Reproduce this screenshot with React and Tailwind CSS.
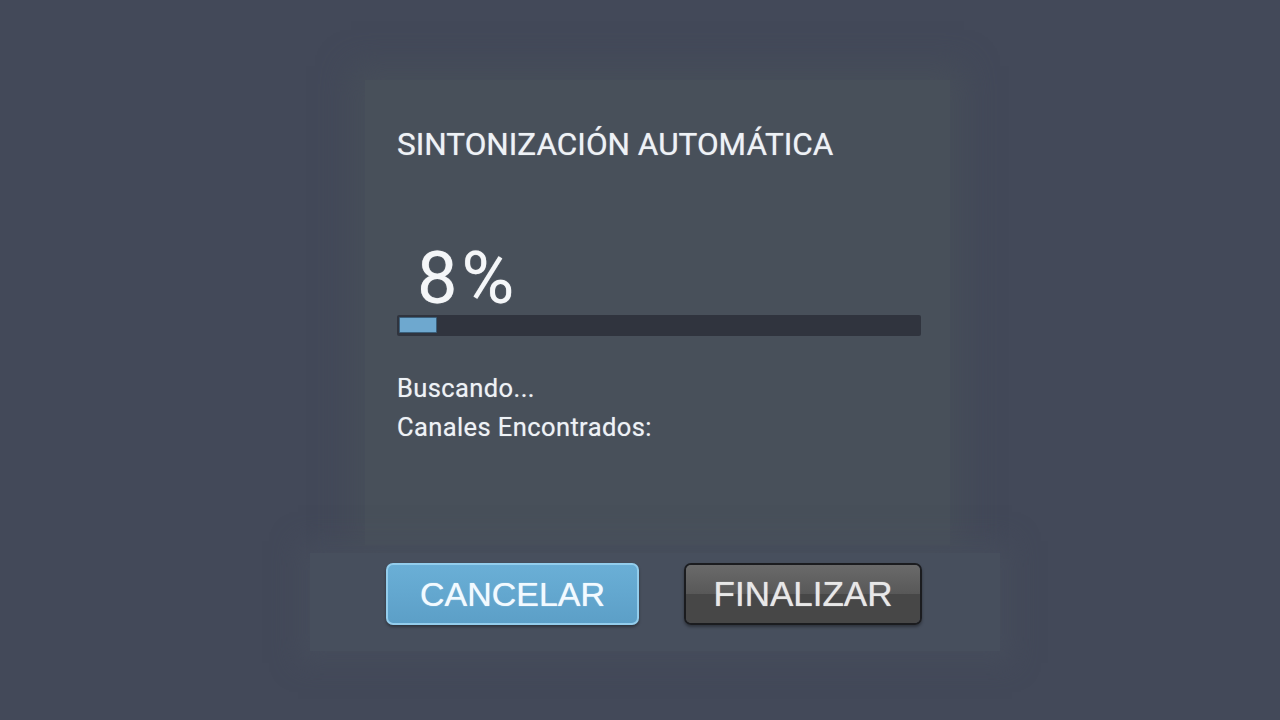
export default function App() {
  return (
    <div
      className="w-full h-[720px] bg-[#434959] overflow-hidden flex flex-col"
      style={{ fontFamily: "Roboto, 'Noto Sans', sans-serif" }}
    >
      <div className="pl-[365px] pt-[80px]">
        <div className="w-[585px] h-[465px] bg-[#48505a] shadow-[0_0_30px_14px_rgba(72,80,90,0.75)] pl-[32px] pt-[49px] flex flex-col">
          <div className="text-[31.5px] leading-[31px] text-[#eef2f6] [text-shadow:0_0_1px_rgba(255,255,255,0.6)]">
            SINTONIZACIÓN AUTOMÁTICA
          </div>
          <div className="mt-[83px] pl-[20px] text-[72px] leading-[72px] tracking-[4px] text-[#f4f6f8] [text-shadow:0_0_1px_rgba(255,255,255,0.6)]">
            8%
          </div>
          <div className="w-[524px] h-[21px] bg-[#30343e] rounded-[2px] p-[2px] pb-[3px] flex">
            <div className="w-[38px] h-full bg-[#6ea8cf] border border-[#3b5f7a] rounded-[1px]"></div>
          </div>
          <div className="mt-[33px] text-[25.5px] leading-[39px] tracking-[0.4px] text-[#eef2f6] [text-shadow:0_0_1px_rgba(255,255,255,0.5)]">
            <div>Buscando...</div>
            <div>Canales Encontrados:</div>
          </div>
        </div>
      </div>
      <div className="pl-[310px] pt-[8px]">
        <div className="w-[690px] h-[98px] bg-[#474f5d] shadow-[0_0_24px_12px_rgba(71,79,93,0.7)] pl-[76px] pt-[10px] flex gap-[45px]">
          <div
            className="w-[253px] h-[62px] rounded-[7px] border-2 border-[#93cdec] bg-gradient-to-b from-[#6aafd6] via-[#63a7cf] to-[#5c9fc7] flex items-center justify-center text-[34px] text-[#f2faff] shadow-[0_2px_3px_rgba(0,0,0,0.35)] [text-shadow:0_0_1px_rgba(255,255,255,0.8)]"
            style={{ fontFamily: "'Liberation Sans', Arial, sans-serif" }}
          >
            CANCELAR
          </div>
          <div
            className="w-[238px] h-[62px] rounded-[7px] border-2 border-[#1b1c1f] flex flex-col overflow-hidden relative text-[35px] text-[#e8e8e8] shadow-[0_2px_3px_rgba(0,0,0,0.35)] [text-shadow:0_0_1px_rgba(255,255,255,0.7)]"
            style={{ fontFamily: "'Liberation Sans', Arial, sans-serif" }}
          >
            <div className="h-1/2 bg-gradient-to-b from-[#6a6a6a] to-[#585858]"></div>
            <div className="h-1/2 bg-[#474747]"></div>
            <div className="absolute inset-0 flex items-center justify-center">FINALIZAR</div>
          </div>
        </div>
      </div>
    </div>
  );
}
